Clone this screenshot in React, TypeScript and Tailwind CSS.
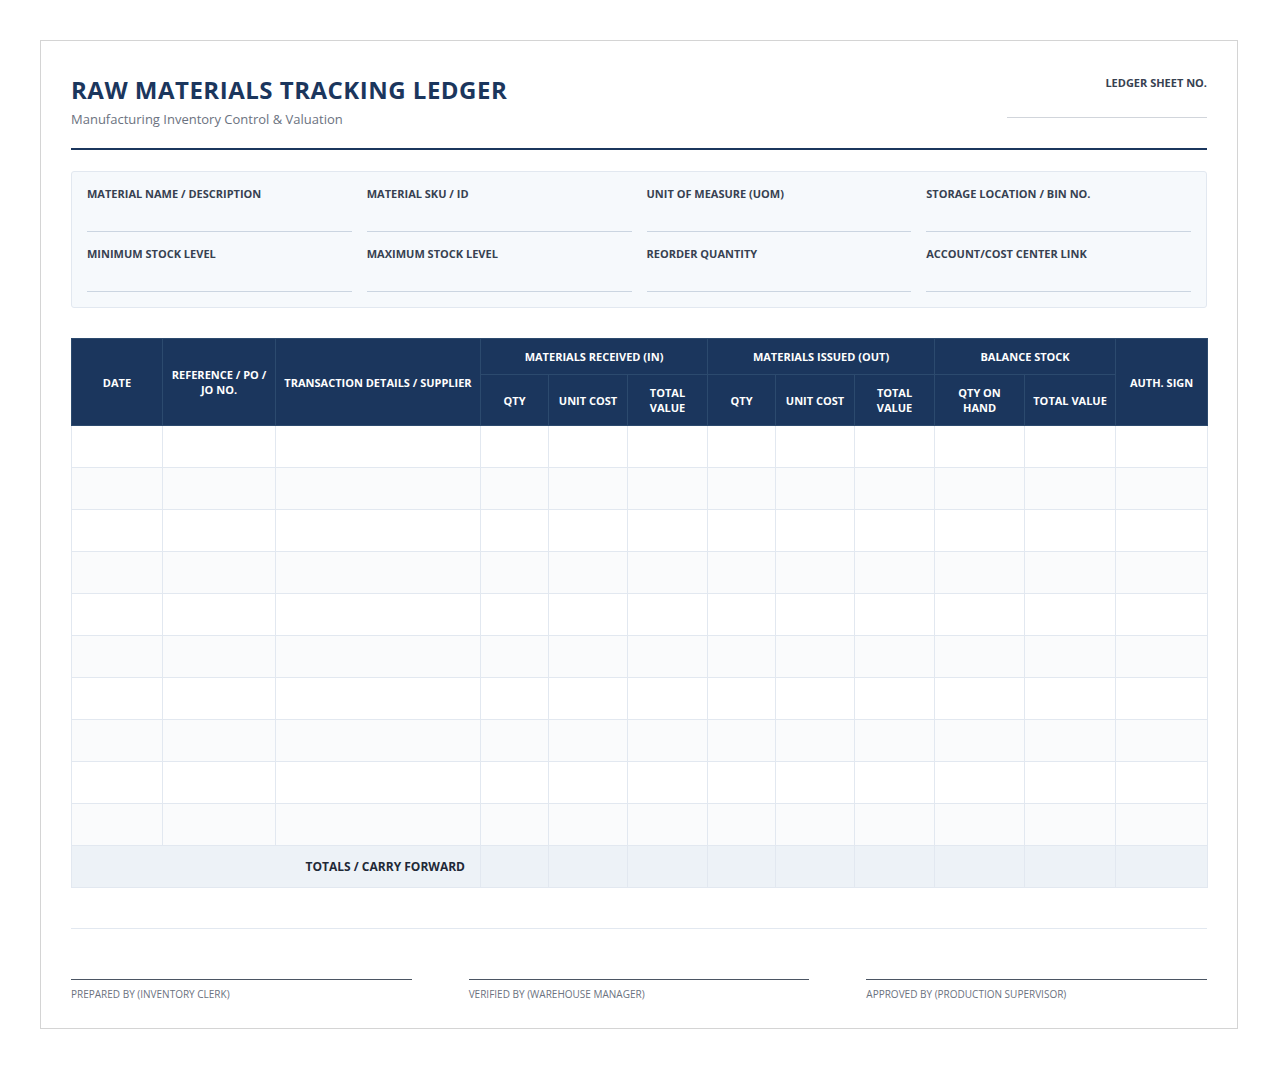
export default function App() {
  const cols = [91, 113, 205, 68, 79, 80, 68, 79, 80, 90, 91, 92];
  const rows = Array.from({ length: 10 });
  const f = { fontFamily: '"Open Sans", "Noto Sans", sans-serif' };
  const th = "border border-[#2c4a6e] text-white text-[11px] font-bold leading-[15px] text-center align-middle px-2";
  const info = ["MATERIAL NAME / DESCRIPTION", "MATERIAL SKU / ID", "UNIT OF MEASURE (UOM)", "STORAGE LOCATION / BIN NO.", "MINIMUM STOCK LEVEL", "MAXIMUM STOCK LEVEL", "REORDER QUANTITY", "ACCOUNT/COST CENTER LINK"];
  return (
    <div className="bg-white min-h-[1069px] pt-10 px-10" style={f}>
      <div className="border border-[#d4d4d4] h-[989px] px-[30px] pt-[34px]">
        <div className="flex justify-between">
          <div>
            <h1 className="text-[24px] font-bold text-[#1b365d] tracking-[0.5px] leading-[30px]">RAW MATERIALS TRACKING LEDGER</h1>
            <p className="text-[13px] text-[#6b7280] mt-[5px] leading-[18px]">Manufacturing Inventory Control &amp; Valuation</p>
          </div>
          <div className="w-[200px] text-right pt-[1px]">
            <div className="text-[11px] font-bold text-[#374151] leading-[14px]">LEDGER SHEET NO.</div>
            <div className="border-b border-[#d1d5db] h-[22px] mt-[6px]" />
          </div>
        </div>
        <div className="h-[2px] bg-[#1b365d] mt-[20px]" />
        <div className="mt-[21px] bg-[#f6f9fc] border border-[#e2e8f0] rounded-[3px] px-[15px] pt-[14px] pb-[15px] grid grid-cols-4 gap-x-[15px] gap-y-[14px]">
          {info.map((l) => (
            <div key={l} className="border-b border-[#cbd5e1] h-[46px]">
              <div className="text-[11px] font-bold text-[#374151] leading-[16px]">{l}</div>
            </div>
          ))}
        </div>
        <table className="mt-[30px] w-full border-collapse table-fixed">
          <colgroup>{cols.map((w, i) => <col key={i} style={{ width: w }} />)}</colgroup>
          <thead className="bg-[#1b365d]">
            <tr className="h-[36px]">
              <th rowSpan={2} className={th}>DATE</th>
              <th rowSpan={2} className={th}>REFERENCE / PO / JO NO.</th>
              <th rowSpan={2} className={th}>TRANSACTION DETAILS / SUPPLIER</th>
              <th colSpan={3} className={th}>MATERIALS RECEIVED (IN)</th>
              <th colSpan={3} className={th}>MATERIALS ISSUED (OUT)</th>
              <th colSpan={2} className={th}>BALANCE STOCK</th>
              <th rowSpan={2} className={th}>AUTH. SIGN</th>
            </tr>
            <tr className="h-[51px]">
              {["QTY", "UNIT COST", "TOTAL VALUE", "QTY", "UNIT COST", "TOTAL VALUE", "QTY ON HAND", "TOTAL VALUE"].map((t, i) => (
                <th key={i} className={th}>{t}</th>
              ))}
            </tr>
          </thead>
          <tbody>
            {rows.map((_, r) => (
              <tr key={r} className={`h-[42px] ${r % 2 ? "bg-[#fafbfc]" : "bg-white"}`}>
                {cols.map((_, i) => <td key={i} className="border border-[#e2e8f0]" />)}
              </tr>
            ))}
            <tr className="h-[42px] bg-[#edf2f7]">
              <td colSpan={3} className="border border-[#e2e8f0] text-right pr-[15px] text-[12px] font-bold text-[#1f2937]">TOTALS / CARRY FORWARD</td>
              {cols.slice(3).map((_, i) => <td key={i} className="border border-[#e2e8f0]" />)}
            </tr>
          </tbody>
        </table>
        <div className="mt-[40px] border-t border-[#e2e8f0]" />
        <div className="mt-[50px] grid grid-cols-3 gap-x-[57px]">
          {["PREPARED BY (INVENTORY CLERK)", "VERIFIED BY (WAREHOUSE MANAGER)", "APPROVED BY (PRODUCTION SUPERVISOR)"].map((t) => (
            <div key={t} className="border-t border-[#4b5563] pt-[7px] text-[10px] text-[#6b7280] leading-[14px]">{t}</div>
          ))}
        </div>
      </div>
    </div>
  );
}
